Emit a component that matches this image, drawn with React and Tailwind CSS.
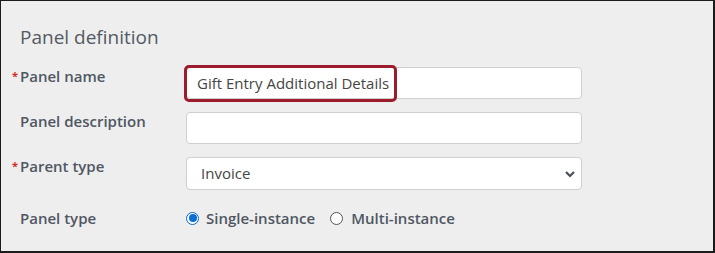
import React from "react";

function Label({ required, children }) {
  return (
    <div className="w-[166px] shrink-0 -mt-[1px] text-[15px] leading-[20px] font-semibold text-[#4f5762] flex items-start">
      {required ? (
        <span className="-ml-[8px] w-[8px] text-[#d42a2a] text-[11px] leading-[20px] font-bold">*</span>
      ) : null}
      <span>{children}</span>
    </div>
  );
}

export default function App() {
  return (
    <div
      className="w-[715px] h-[253px] bg-[#eeeeee] border-t border-l border-r-2 border-b-2 border-[#1b1b1b] pl-[19px] pt-[23px]"
      style={{ fontFamily: '"Open Sans", "Liberation Sans", sans-serif' }}
    >
      <div className="text-[19px] leading-[26px] text-[#535a63]">Panel definition</div>

      <div className="mt-[17px] flex">
        <Label required>Panel name</Label>
        <div className="relative w-[396px] h-[32px] bg-white border border-[#cfcfcf] rounded-[4px]">
          <div className="absolute -left-[3px] -top-[3px] w-[213px] h-[37px] border-[3px] border-[#9c1c2c] rounded-[5px]" />
          <div className="pl-[10px] text-[15px] leading-[30px] text-[#454545]">Gift Entry Additional Details</div>
        </div>
      </div>

      <div className="mt-[13px] flex">
        <Label>Panel description</Label>
        <div className="w-[396px] h-[32px] bg-white border border-[#cfcfcf] rounded-[4px]" />
      </div>

      <div className="mt-[13px] flex">
        <Label required>Parent type</Label>
        <div className="relative w-[396px] h-[33px] bg-white border border-[#cfcfcf] rounded-[4px] flex items-center">
          <span className="pl-[14px] text-[15px] text-[#454545]">Invoice</span>
          <svg
            className="absolute right-[5px] top-[12px]"
            width="12"
            height="8"
            viewBox="0 0 12 8"
          >
            <path d="M2 2 L6 6 L10 2" fill="none" stroke="#4a4f57" strokeWidth="2.2" />
          </svg>
        </div>
      </div>

      <div className="mt-[18px] flex items-center h-[20px]">
        <div className="w-[166px] shrink-0 text-[15px] leading-[20px] font-semibold text-[#4f5762]">Panel type</div>
        <div className="flex items-center text-[15px] font-semibold text-[#4f5762]">
          <span className="w-[13px] h-[13px] rounded-full border border-[#0a66c8] bg-white flex items-center justify-center">
            <span className="w-[8px] h-[8px] rounded-full bg-[#0a6ed8]" />
          </span>
          <span className="ml-[7px]">Single-instance</span>
          <span className="ml-[15px] w-[13px] h-[13px] rounded-full border border-[#555] bg-white" />
          <span className="ml-[8px]">Multi-instance</span>
        </div>
      </div>
    </div>
  );
}
